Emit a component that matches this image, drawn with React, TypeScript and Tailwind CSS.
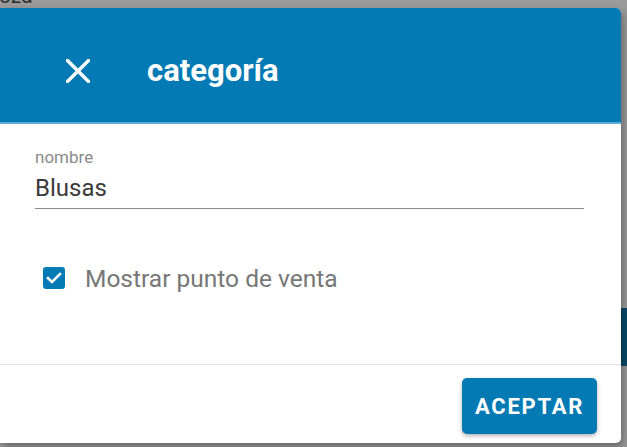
import React from "react";

const CloseIcon = () => (
  <svg width="24" height="24" viewBox="0 0 24 24" fill="none">
    <path d="M1.5 1.5 L22.5 22.5 M22.5 1.5 L1.5 22.5" stroke="white" strokeWidth="3.4" strokeLinecap="square" />
  </svg>
);

const CheckBox = () => (
  <div className="w-[22px] h-[22px] rounded-[3px] bg-[#037ab3] flex items-center justify-center shrink-0">
    <svg width="22" height="22" viewBox="0 0 22 22" fill="none">
      <path d="M5 11.2 L9 15 L17 7" stroke="white" strokeWidth="2.6" strokeLinecap="square" />
    </svg>
  </div>
);

const App = () => {
  return (
    <div className="relative w-[627px] h-[447px] overflow-hidden bg-[#9b9b9b] font-['Roboto',sans-serif]">
      {/* page behind the overlay */}
      <div className="absolute left-[-1px] top-[-14px] text-[21px] leading-[21px] text-[#2e2e2e]">oza</div>
      <div className="absolute right-0 top-[308px] w-[12px] h-[58px] bg-[#0b4a68]" />

      {/* dialog */}
      <div className="absolute left-0 top-[8px] w-[621px] h-[435px] bg-white rounded-r-[5px] shadow-[2px_4px_8px_rgba(0,0,0,0.35)] flex flex-col overflow-hidden">
        <header className="h-[116px] bg-[#037ab3] border-b-2 border-[#5aaed6] flex items-center pt-[11px] shrink-0">
          <div className="ml-[66px]">
            <CloseIcon />
          </div>
          <h1 className="ml-[57px] text-[31px] leading-[30px] font-bold text-white">categoría</h1>
        </header>

        <div className="px-[35px]">
          <label className="block mt-[25px] text-[17px] leading-[17px] text-[#8a8a8a]">nombre</label>
          <div className="w-[549px] mt-[10px] pb-[8px] border-b border-[#8c8c8c] text-[24px] leading-[24px] text-[#3b3b3b]">
            Blusas
          </div>

          <div className="mt-[58px] ml-[8px] flex items-start gap-[20px]">
            <CheckBox />
            <span className="text-[24.5px] leading-[24px] text-[#777777]">Mostrar punto de venta</span>
          </div>
        </div>

        <div className="mt-auto border-t border-[#e2e2e2] flex justify-end pt-[13px] pb-[9px] pr-[24px]">
          <button className="w-[135px] h-[56px] rounded-[5px] bg-[#037ab3] text-white text-[22px] font-bold tracking-[0.08em] shadow-[0_2px_4px_rgba(0,0,0,0.3)]">
            ACEPTAR
          </button>
        </div>
      </div>
    </div>
  );
};

export default App;
